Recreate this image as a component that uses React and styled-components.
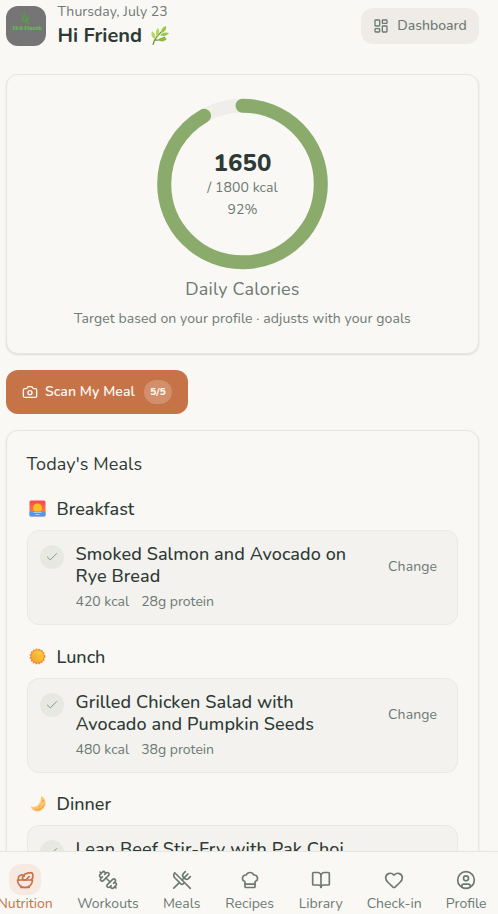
import styled, { createGlobalStyle } from 'styled-components'
import {
  BookOpen,
  Camera,
  Check,
  ChefHat,
  CircleUser,
  Heart,
  LayoutDashboard,
  Salad,
  UtensilsCrossed
} from 'lucide-react'

const GlobalStyle = createGlobalStyle`
  * {
    box-sizing: border-box;
  }

  body {
    margin: 0;
    overflow: hidden;
    background: #faf8f5;
    color: #2d3a35;
    font-family: Nunito, Lato, 'Open Sans', sans-serif;
    font-size: 14px;
  }

  button {
    border: 0;
    font: inherit;
  }
`

const Shell = styled.div`
  display: flex;
  flex-direction: column;
  height: 914px;
  overflow: hidden;
`

const Main = styled.main`
  flex: 1;
  min-height: 0;
  overflow: hidden;
  padding: 1px 19px 0 6px;
`

const Header = styled.header`
  display: flex;
  align-items: center;
  height: 49px;
  margin-bottom: 24px;
`

const Logo = styled.div`
  width: 40px;
  height: 40px;
  border-radius: 12px;
  overflow: hidden;
  background: #757575;

  svg {
    display: block;
  }
`

const Greeting = styled.div`
  flex: 1;
  margin-left: 11.5px;
`

const DateText = styled.div`
  line-height: 20px;
  color: #6b7a73;
  letter-spacing: 0.07px;
`

const Name = styled.h1`
  display: flex;
  align-items: center;
  gap: 9px;
  margin: 0;
  font-size: 20px;
  font-weight: 700;
  line-height: 28px;
`

const DashboardButton = styled.button`
  display: flex;
  align-items: center;
  justify-content: center;
  gap: 8px;
  width: 118px;
  height: 36px;
  padding: 0;
  border-radius: 12px;
  background: #efece7;
  color: #6b7a73;
  font-weight: 500;
`

const Card = styled.section`
  border: 1px solid #e6e5e0;
  border-radius: 12px;
  background: #faf8f5;
  box-shadow: 0 1px 2px rgba(45, 58, 53, 0.14);
`

const CaloriesCard = styled(Card)`
  display: flex;
  flex-direction: column;
  align-items: center;
  height: 280px;
  padding-top: 23px;
`

const Ring = styled.div`
  display: grid;
  place-items: center;
  width: 171px;
  height: 172px;

  > * {
    grid-area: 1 / 1;
  }
`

const RingText = styled.div`
  padding-top: 2px;
  text-align: center;
  color: #6b7a73;
  line-height: 22px;
  letter-spacing: 0.1px;

  strong {
    display: block;
    color: #2d3a35;
    font-size: 24px;
    font-weight: 800;
    line-height: 28px;
  }
`

const CaloriesTitle = styled.div`
  margin-top: 6px;
  font-size: 18px;
  line-height: 27px;
  letter-spacing: 0.2px;
  color: #6b7a73;
`

const CaloriesNote = styled.div`
  margin-top: 6px;
  line-height: 20px;
  letter-spacing: 0.08px;
  color: #6b7a73;
`

const ScanButton = styled.button`
  display: flex;
  align-items: center;
  width: 182px;
  height: 44px;
  margin: 16px 0;
  padding: 0 16px;
  border-radius: 12px;
  background: #c67348;
  color: #fff9f4;
  font-weight: 600;

  span {
    margin: 0 0 1px 7px;
    letter-spacing: 0.08px;
  }
`

const ScanCount = styled.small`
  display: flex;
  align-items: center;
  justify-content: center;
  width: 28px;
  height: 24px;
  margin-left: auto;
  border-radius: 12px;
  background: rgba(255, 255, 255, 0.2);
  font-size: 10px;
  font-weight: 800;
`

const MealsCard = styled(Card)`
  padding: 20px 20px 20px 19.5px;
`

const MealsTitle = styled.h2`
  margin: 0 0 18px;
  font-size: 18px;
  font-weight: 400;
  line-height: 27px;
  letter-spacing: 0.1px;
`

const MealGroup = styled.div`
  margin-bottom: 18.6px;
`

const MealHeading = styled.h3`
  display: flex;
  align-items: center;
  gap: 9px;
  height: 26px;
  margin: 0 0 8px;
  font-size: 18px;
  font-weight: 500;
`

const Meal = styled.div`
  display: flex;
  align-items: flex-start;
  height: 95px;
  padding: 12px;
  border: 1px solid #e9e8e3;
  border-radius: 12px;
  background: #f4f2ef;
`

const MealCheck = styled.div`
  display: grid;
  place-items: center;
  width: 24px;
  height: 24px;
  margin: 2px 12px 0 0;
  border-radius: 50%;
  background: #e6e8e1;
  color: #7d9d82;
`

const MealInfo = styled.div`
  flex: 1;
`

const MealName = styled.div`
  font-size: 18px;
  font-weight: 500;
  line-height: 22px;
  letter-spacing: 0.1px;
  white-space: pre-line;
`

const MealFacts = styled.div`
  display: flex;
  gap: 12px;
  margin-top: 5px;
  line-height: 20px;
  color: #6b7a73;
`

const ChangeButton = styled.button`
  height: 47px;
  padding: 0 8px;
  background: none;
  color: #6b7a73;
  letter-spacing: 0.08px;
`

const Nav = styled.nav`
  display: flex;
  justify-content: flex-end;
  gap: 24px;
  height: 63px;
  padding: 12px 11.3px 0 0;
  border-top: 1px solid #e6e5e0;
  background: #faf8f5;
`

const NavItem = styled.a`
  display: flex;
  flex-direction: column;
  align-items: center;
  flex: none;
  width: ${props => props.$width}px;
  color: ${props => (props.$active ? '#c67348' : '#6b7a73')};
  line-height: 20px;
  white-space: nowrap;
`

const NavIcon = styled.div`
  display: grid;
  place-items: center;
  width: 32px;
  height: 32px;
  margin-bottom: -1px;
  border-radius: 12px;
  background: ${props => (props.$active ? '#f5e9e2' : 'none')};
`

const Dumbbell = ({ size }) => (
  <svg
    width={size}
    height={size}
    viewBox="0 0 24 24"
    fill="none"
    stroke="currentColor"
    strokeWidth="2"
    strokeLinecap="round"
    strokeLinejoin="round"
  >
    <path d="M14.4 14.4 9.6 9.6" />
    <path d="M18.657 21.485a2 2 0 1 1-2.829-2.828l-1.767 1.768a2 2 0 1 1-2.829-2.829l6.364-6.364a2 2 0 1 1 2.829 2.829l-1.768 1.767a2 2 0 1 1 2.828 2.829z" />
    <path d="m21.5 21.5-1.4-1.4" />
    <path d="M3.9 3.9 2.5 2.5" />
    <path d="M6.404 12.768a2 2 0 1 1-2.829-2.829l1.768-1.767a2 2 0 1 1-2.828-2.829l2.828-2.828a2 2 0 1 1 2.829 2.828l1.767-1.768a2 2 0 1 1 2.829 2.829z" />
  </svg>
)

const Herb = () => (
  <svg width="18" height="20" viewBox="0 0 18 20" fill="none">
    <path d="M2 19C3 13 7 8 14 3M4 14C8 15 11 13 14 11" stroke="#65973b" strokeWidth="1.2" />
    <path d="M4 13C0 11 0 8 1 5C4 7 5 10 4 13ZM6 10C4 7 5 4 7 2C9 5 8 8 6 10Z" fill="#b3d957" />
    <path d="M10 7C10 3 12 1 15 0C16 3 14 6 10 7ZM9 9C12 6 15 6 18 7C16 10 12 11 9 9Z" fill="#9aca45" />
    <path d="M7 14C10 11 13 11 16 13C13 16 10 16 7 14Z" fill="#8cbd3c" />
  </svg>
)

const Sunrise = () => (
  <svg width="21" height="18" viewBox="0 0 21 18">
    <defs>
      <linearGradient id="sky" x2="0" y2="1">
        <stop stopColor="#f9474c" />
        <stop offset="1" stopColor="#ff8d3c" />
      </linearGradient>
    </defs>
    <rect x="2.5" y="0.5" width="16" height="16" rx="1.5" fill="url(#sky)" />
    <circle cx="10.5" cy="8" r="4.5" fill="#ffbd20" />
    <path d="M2.5 11.5h16V15a1.5 1.5 0 0 1-1.5 1.5H4A1.5 1.5 0 0 1 2.5 15z" fill="#4998ff" />
    <path d="M6.5 12.5h8M8.5 14.5h4" stroke="#b8d3ff" strokeWidth="0.8" />
  </svg>
)

const Sun = () => (
  <svg width="21" height="18" viewBox="0 0 21 18">
    <defs>
      <linearGradient id="sun" x1="1" x2="0" y2="1">
        <stop stopColor="#ffd53c" />
        <stop offset="1" stopColor="#ee9f2c" />
      </linearGradient>
    </defs>
    <circle cx="10.5" cy="8.5" r="7" fill="#f58232" />
    <circle cx="10.5" cy="8.5" r="7.2" fill="none" stroke="#f58232" strokeWidth="1.4" strokeDasharray="1.6 1.3" />
    <circle cx="10.5" cy="8.5" r="6.2" fill="url(#sun)" />
  </svg>
)

const Moon = () => (
  <svg width="21" height="18" viewBox="0 0 21 18">
    <path d="M14 1C20.5 4 19.5 12 14.5 15.2C10 18 5 15.5 3.5 11.5C8.5 13.5 15 9 14 1Z" fill="#ffc568" />
    <path d="M18.2 8C17.5 14 10.5 18 5.5 14C11.5 15 15.5 12 18.2 8Z" fill="#f3a955" />
    <path d="M16 5v2M13.5 11l-1.5 1.3" stroke="#e5984b" />
  </svg>
)

const RADIUS = 78.3
const LENGTH = 2 * Math.PI * RADIUS

const CalorieRing = ({ eaten, target }) => (
  <Ring>
    <svg width="171" height="172" viewBox="0 0 171 172" fill="none" strokeWidth="14">
      <circle cx="85.5" cy="86" r={RADIUS} stroke="#efeeea" />
      <circle
        cx="85.5"
        cy="86"
        r={RADIUS}
        stroke="#8bab6d"
        strokeLinecap="round"
        strokeDasharray={`${(LENGTH * eaten) / target} ${LENGTH}`}
        transform="rotate(-90 85.5 86)"
      />
    </svg>
    <RingText>
      <strong>{eaten}</strong>
      <div>/ {target} kcal</div>
      <div>{Math.round((eaten / target) * 100)}%</div>
    </RingText>
  </Ring>
)

const meals = [
  { label: 'Breakfast', icon: Sunrise, name: 'Smoked Salmon and Avocado on\nRye Bread', kcal: 420, protein: 28 },
  { label: 'Lunch', icon: Sun, name: 'Grilled Chicken Salad with\nAvocado and Pumpkin Seeds', kcal: 480, protein: 38 },
  { label: 'Dinner', icon: Moon, name: 'Lean Beef Stir-Fry with Pak Choi' }
]

const links = [
  { label: 'Nutrition', icon: Salad, width: 56, active: true },
  { label: 'Workouts', icon: Dumbbell, width: 61.6 },
  { label: 'Meals', icon: UtensilsCrossed, width: 38 },
  { label: 'Recipes', icon: ChefHat, width: 50 },
  { label: 'Library', icon: BookOpen, width: 44 },
  { label: 'Check-in', icon: Heart, width: 55 },
  { label: 'Profile', icon: CircleUser, width: 41 }
]

const App = () => {
  return (
    <Shell>
      <GlobalStyle />
      <Main>
        <Header>
          <Logo>
            <svg width="40" height="40" viewBox="0 0 40 40" fill="none">
              <path
                d="M23 18C21 15 17 15 15 12M20 15L18.5 6M20.5 15L23 9M18 13L15.5 8.5M19 15L16 14M21 15L23.5 12"
                stroke="#55a043"
                strokeWidth="1.1"
              />
              <text
                x="6.5"
                y="24"
                fill="#66c04c"
                fontFamily="Liberation Serif"
                fontSize="5.5"
                fontWeight="700"
                textLength="29"
              >
                Fit &amp; Flourish
              </text>
            </svg>
          </Logo>
          <Greeting>
            <DateText>Thursday, July 23</DateText>
            <Name>
              Hi Friend <Herb />
            </Name>
          </Greeting>
          <DashboardButton>
            <LayoutDashboard size={16} />
            <span>Dashboard</span>
          </DashboardButton>
        </Header>

        <CaloriesCard>
          <CalorieRing eaten={1650} target={1800} />
          <CaloriesTitle>Daily Calories</CaloriesTitle>
          <CaloriesNote>Target based on your profile · adjusts with your goals</CaloriesNote>
        </CaloriesCard>

        <ScanButton>
          <Camera size={16} />
          <span>Scan My Meal</span>
          <ScanCount>5/5</ScanCount>
        </ScanButton>

        <MealsCard>
          <MealsTitle>Today's Meals</MealsTitle>
          {meals.map(({ label, icon: Icon, name, kcal, protein }) => (
            <MealGroup key={label}>
              <MealHeading>
                <Icon />
                {label}
              </MealHeading>
              <Meal>
                <MealCheck>
                  <Check size={14} strokeWidth={1.7} />
                </MealCheck>
                <MealInfo>
                  <MealName>{name}</MealName>
                  {kcal && (
                    <MealFacts>
                      <span>{kcal} kcal</span>
                      <span>{protein}g protein</span>
                    </MealFacts>
                  )}
                </MealInfo>
                {kcal && <ChangeButton>Change</ChangeButton>}
              </Meal>
            </MealGroup>
          ))}
        </MealsCard>
      </Main>

      <Nav>
        {links.map(({ label, icon: Icon, width, active }) => (
          <NavItem key={label} $width={width} $active={active}>
            <NavIcon $active={active}>
              <Icon size={20} />
            </NavIcon>
            {label}
          </NavItem>
        ))}
      </Nav>
    </Shell>
  )
}

export default App
